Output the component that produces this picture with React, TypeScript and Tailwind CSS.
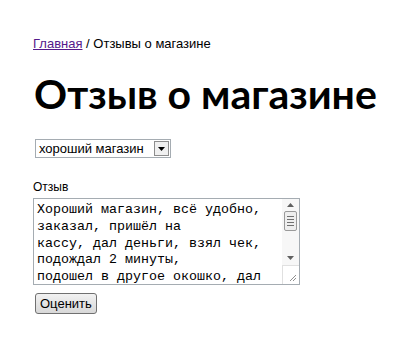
import React from "react";

export default function App() {
  const lines = [
    "Хороший магазин, всё удобно,",
    "заказал, пришёл на",
    "кассу, дал деньги, взял чек,",
    "подождал 2 минуты,",
    "подошел в другое окошко, дал",
  ];
  return (
    <div className="w-[410px] h-[359px] bg-white pl-[33px] pt-[36px]" style={{ fontFamily: '"Liberation Sans", Arial, sans-serif' }}>
      <div className="text-[13px] leading-[15px] text-black">
        <a href="#" className="text-[#551a8b] underline">Главная</a> / Отзывы о магазине
      </div>
      <h1 className="mt-[19px] ml-[1px] text-[41px] leading-[48px] font-bold text-black whitespace-nowrap" style={{ fontFamily: 'Lato, sans-serif' }}>
        Отзыв о магазине
      </h1>
      <div className="mt-[21px] ml-[2px] flex items-center w-[136px] h-[19px] border border-[#a5acb2] bg-white">
        <div className="flex-1 pl-[3px] text-[13px] leading-[17px] text-black">хороший магазин</div>
        <div className="w-[15px] h-[15px] mr-[1px] border border-[#8d8d8d] bg-[#f0f0f0] flex items-center justify-center">
          <svg width="7" height="4" viewBox="0 0 7 4"><path d="M0 0H7L3.5 4Z" fill="#000" /></svg>
        </div>
      </div>
      <div className="mt-[22px] text-[12px] leading-[15px] text-black">Отзыв</div>
      <div className="mt-[3px] flex w-[267px] h-[87px] border border-[#a5acb2] bg-white">
        <div className="flex-1 overflow-hidden pl-[3px] pt-[3px] text-[13.33px] leading-[16.8px] text-black whitespace-pre" style={{ fontFamily: '"Liberation Mono", "Courier New", monospace' }}>
          {lines.map((l, i) => (
            <div key={i}>{l}</div>
          ))}
        </div>
        <div className="w-[17px] flex flex-col bg-[#f7f7f7]">
          <div className="h-[12px] flex items-center justify-center">
            <svg width="7" height="4" viewBox="0 0 7 4"><path d="M0 4H7L3.5 0Z" fill="#606060" /></svg>
          </div>
          <div className="mx-[2px] h-[20px] border border-[#9a9a9a] rounded-[2px] bg-[#eeeeee] flex flex-col items-center justify-center gap-[2px]">
            <div className="w-[7px] h-[1px] bg-[#707070]" />
            <div className="w-[7px] h-[1px] bg-[#707070]" />
            <div className="w-[7px] h-[1px] bg-[#707070]" />
            <div className="w-[7px] h-[1px] bg-[#707070]" />
          </div>
          <div className="flex-1" />
          <div className="h-[14px] flex items-center justify-center">
            <svg width="7" height="4" viewBox="0 0 7 4"><path d="M0 0H7L3.5 4Z" fill="#606060" /></svg>
          </div>
          <div className="h-[19px] bg-white border-t border-l border-[#e0e0e0] flex items-end justify-end p-[2px]">
            <svg width="8" height="8" viewBox="0 0 8 8"><path d="M7 1L1 7M7 4L4 7" stroke="#909090" strokeWidth="1" /></svg>
          </div>
        </div>
      </div>
      <button className="mt-[8px] ml-[2px] h-[21px] px-[4px] border border-[#707070] rounded-[3px] bg-gradient-to-b from-[#f2f2f2] to-[#d8d8d8] text-[13px] leading-[17px] text-black">
        Оценить
      </button>
    </div>
  );
}
